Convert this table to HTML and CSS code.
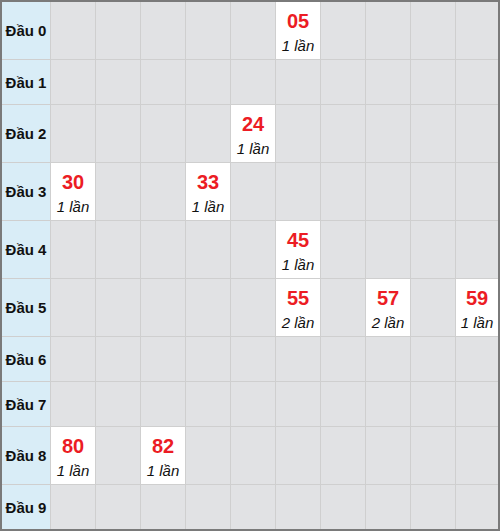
FILE: index.html
```html
<!DOCTYPE html>
<html>
<head>
  <link rel="stylesheet" href="styles.css">
</head>
<body>
  <div class="board">
    <div class="head">Đầu 0</div>
    <div class="cell"></div><div class="cell"></div><div class="cell"></div><div class="cell"></div><div class="cell"></div>
    <div class="cell hit"><b>05</b><i>1 lần</i></div>
    <div class="cell"></div><div class="cell"></div><div class="cell"></div><div class="cell"></div>

    <div class="head short">Đầu 1</div>
    <div class="cell"></div><div class="cell"></div><div class="cell"></div><div class="cell"></div><div class="cell"></div>
    <div class="cell"></div><div class="cell"></div><div class="cell"></div><div class="cell"></div><div class="cell"></div>

    <div class="head">Đầu 2</div>
    <div class="cell"></div><div class="cell"></div><div class="cell"></div><div class="cell"></div>
    <div class="cell hit"><b>24</b><i>1 lần</i></div>
    <div class="cell"></div><div class="cell"></div><div class="cell"></div><div class="cell"></div><div class="cell"></div>

    <div class="head">Đầu 3</div>
    <div class="cell hit"><b>30</b><i>1 lần</i></div>
    <div class="cell"></div><div class="cell"></div>
    <div class="cell hit"><b>33</b><i>1 lần</i></div>
    <div class="cell"></div><div class="cell"></div><div class="cell"></div><div class="cell"></div><div class="cell"></div><div class="cell"></div>

    <div class="head">Đầu 4</div>
    <div class="cell"></div><div class="cell"></div><div class="cell"></div><div class="cell"></div><div class="cell"></div>
    <div class="cell hit"><b>45</b><i>1 lần</i></div>
    <div class="cell"></div><div class="cell"></div><div class="cell"></div><div class="cell"></div>

    <div class="head">Đầu 5</div>
    <div class="cell"></div><div class="cell"></div><div class="cell"></div><div class="cell"></div><div class="cell"></div>
    <div class="cell hit"><b>55</b><i>2 lần</i></div>
    <div class="cell"></div>
    <div class="cell hit"><b>57</b><i>2 lần</i></div>
    <div class="cell"></div>
    <div class="cell hit"><b>59</b><i>1 lần</i></div>

    <div class="head short">Đầu 6</div>
    <div class="cell"></div><div class="cell"></div><div class="cell"></div><div class="cell"></div><div class="cell"></div>
    <div class="cell"></div><div class="cell"></div><div class="cell"></div><div class="cell"></div><div class="cell"></div>

    <div class="head short">Đầu 7</div>
    <div class="cell"></div><div class="cell"></div><div class="cell"></div><div class="cell"></div><div class="cell"></div>
    <div class="cell"></div><div class="cell"></div><div class="cell"></div><div class="cell"></div><div class="cell"></div>

    <div class="head">Đầu 8</div>
    <div class="cell hit"><b>80</b><i>1 lần</i></div>
    <div class="cell"></div>
    <div class="cell hit"><b>82</b><i>1 lần</i></div>
    <div class="cell"></div><div class="cell"></div><div class="cell"></div><div class="cell"></div><div class="cell"></div><div class="cell"></div><div class="cell"></div>

    <div class="head short">Đầu 9</div>
    <div class="cell"></div><div class="cell"></div><div class="cell"></div><div class="cell"></div><div class="cell"></div>
    <div class="cell"></div><div class="cell"></div><div class="cell"></div><div class="cell"></div><div class="cell"></div>
  </div>
</body>
</html>
```

FILE: styles.css
```css
body {
  margin: 0;
  font-family: "Liberation Sans", Arial, sans-serif;
}

.board {
  width: 500px;
  height: 531px;
  box-sizing: border-box;
  border: 2px solid #7a7a7a;
  background: #cfcfcf;
  display: grid;
  grid-template-columns: 48px repeat(9, 44px) 1fr;
  grid-template-rows: 57px 44px 57px 57px 57px 57px 44px 44px 57px 44px;
  gap: 1px;
}

.head {
  background: #d9edf7;
  display: flex;
  align-items: center;
  justify-content: center;
  font-weight: bold;
  font-size: 15px;
  color: #111;
}

.cell {
  background: #e1e2e4;
}

.cell.hit {
  background: #fff;
  display: flex;
  flex-direction: column;
  align-items: center;
  padding-top: 8px;
  box-sizing: border-box;
}

.hit b {
  color: #ec1c24;
  font-size: 20px;
  line-height: 23px;
}

.hit i {
  color: #111;
  font-size: 15px;
  line-height: 20px;
  margin-top: 3px;
}
```
